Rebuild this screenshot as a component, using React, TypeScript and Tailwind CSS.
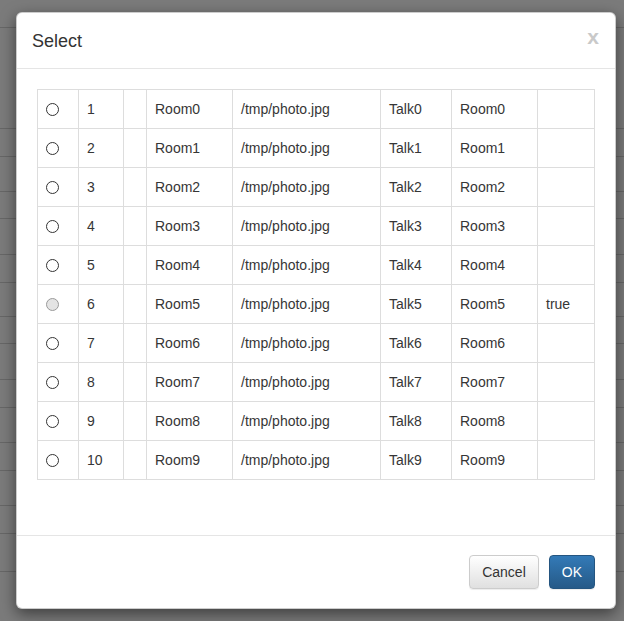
import React from 'react';

const rows = Array.from({ length: 10 }, (_, i) => ({
  id: i + 1,
  room: `Room${i}`,
  photo: '/tmp/photo.jpg',
  talk: `Talk${i}`,
  flag: i === 5 ? 'true' : '',
}));

// behind-the-backdrop page lines
const pageLines = [27, 128, 156, 191, 218, 254, 282, 316, 343, 379, 407, 442, 470, 505, 533, 571];

function Radio({ muted }: { muted?: boolean }) {
  return (
    <span
      className={
        muted
          ? 'block w-[13px] h-[13px] rounded-full border border-[#9a9a9a] bg-[#e4e4e4]'
          : 'block w-[13px] h-[13px] rounded-full border border-[#333] bg-white'
      }
    />
  );
}

export default function App() {
  return (
    <div
      className="relative h-[621px] overflow-hidden bg-[#7b7b7b] text-[14px] text-[#363636]"
      style={{ fontFamily: '"Liberation Sans", Arial, sans-serif' }}
    >
      {/* page under the backdrop */}
      <div className="flex flex-col">
        {pageLines.map((y, i) => (
          <div
            key={i}
            className="h-[1px] bg-[#676767]"
            style={{ marginTop: i === 0 ? y : y - pageLines[i - 1] - 1 }}
          />
        ))}
      </div>

      {/* modal */}
      <div className="absolute inset-0 pl-[16px] pt-[12px]">
        <div className="w-[600px] bg-white border border-black/20 rounded-[6px] shadow-[0_5px_15px_rgba(0,0,0,0.5)]">
          <div className="h-[56px] px-[15px] flex items-center justify-between border-b border-[#e5e5e5]">
            <h4 className="text-[18px] leading-[26px] text-[#333]">Select</h4>
            <button className="text-[21px] font-bold leading-none text-[#c9c9c9] -mt-[9px] mr-[1px]">x</button>
          </div>

          <div className="px-[20px] pt-[20px] pb-[55px]">
            <div className="grid grid-cols-[41px_45px_23px_86px_148px_71px_86px_57px] border-l border-t border-[#dddddd]">
              {rows.map((r) => (
                <React.Fragment key={r.id}>
                  <div className="h-[39px] border-r border-b border-[#dddddd] px-[8px] flex items-center">
                    <Radio muted={r.id === 6} />
                  </div>
                  <div className="h-[39px] border-r border-b border-[#dddddd] px-[8px] flex items-center">{r.id}</div>
                  <div className="h-[39px] border-r border-b border-[#dddddd]" />
                  <div className="h-[39px] border-r border-b border-[#dddddd] px-[8px] flex items-center">{r.room}</div>
                  <div className="h-[39px] border-r border-b border-[#dddddd] px-[8px] flex items-center">{r.photo}</div>
                  <div className="h-[39px] border-r border-b border-[#dddddd] px-[8px] flex items-center">{r.talk}</div>
                  <div className="h-[39px] border-r border-b border-[#dddddd] px-[8px] flex items-center">{r.room}</div>
                  <div className="h-[39px] border-r border-b border-[#dddddd] px-[8px] flex items-center">{r.flag}</div>
                </React.Fragment>
              ))}
            </div>
          </div>

          <div className="border-t border-[#e5e5e5] pl-[19px] pr-[20px] py-[19px] flex justify-end gap-[10px]">
            <button className="h-[34px] px-[12px] rounded-[4px] border border-[#cccccc] bg-gradient-to-b from-white to-[#e0e0e0] text-[#333] shadow-[0_1px_1px_rgba(0,0,0,0.075)]">
              Cancel
            </button>
            <button className="h-[34px] px-[12px] rounded-[4px] border border-[#245580] bg-gradient-to-b from-[#337ab7] to-[#265a88] text-white shadow-[0_1px_1px_rgba(0,0,0,0.075)]">
              OK
            </button>
          </div>
        </div>
      </div>
    </div>
  );
}
